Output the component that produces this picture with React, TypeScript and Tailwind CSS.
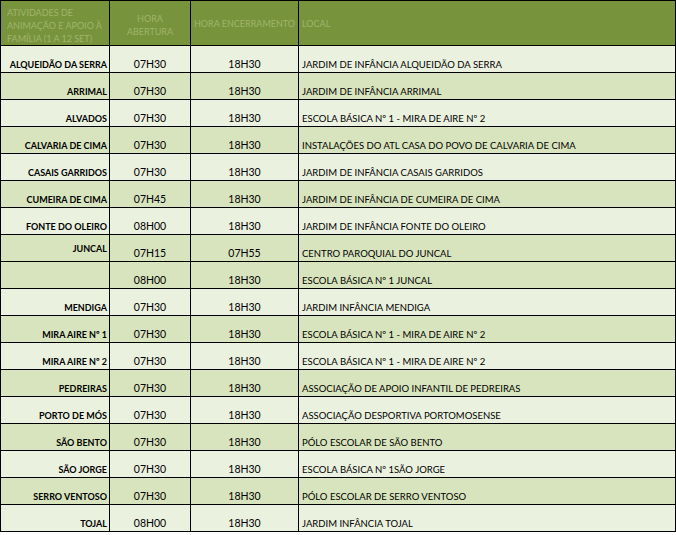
import React from "react";

type Row = { name: string; open: string; close: string; local: string; dark: boolean; mid?: boolean };

const rows: Row[] = [
  { name: "ALQUEIDÃO DA SERRA", open: "07H30", close: "18H30", local: "JARDIM DE INFÂNCIA ALQUEIDÃO DA SERRA", dark: false },
  { name: "ARRIMAL", open: "07H30", close: "18H30", local: "JARDIM DE INFÂNCIA ARRIMAL", dark: true },
  { name: "ALVADOS", open: "07H30", close: "18H30", local: "ESCOLA BÁSICA Nº 1 - MIRA DE AIRE Nº 2", dark: false },
  { name: "CALVARIA DE CIMA", open: "07H30", close: "18H30", local: "INSTALAÇÕES DO ATL CASA DO POVO DE CALVARIA DE CIMA", dark: true },
  { name: "CASAIS GARRIDOS", open: "07H30", close: "18H30", local: "JARDIM DE INFÂNCIA CASAIS GARRIDOS", dark: false },
  { name: "CUMEIRA DE CIMA", open: "07H45", close: "18H30", local: "JARDIM DE INFÂNCIA DE CUMEIRA DE CIMA", dark: true },
  { name: "FONTE DO OLEIRO", open: "08H00", close: "18H30", local: "JARDIM DE INFÂNCIA FONTE DO OLEIRO", dark: false },
  { name: "JUNCAL", open: "07H15", close: "07H55", local: "CENTRO PAROQUIAL DO JUNCAL", dark: true, mid: true },
  { name: "", open: "08H00", close: "18H30", local: "ESCOLA BÁSICA Nº 1 JUNCAL", dark: true },
  { name: "MENDIGA", open: "07H30", close: "18H30", local: "JARDIM INFÂNCIA MENDIGA", dark: false },
  { name: "MIRA AIRE Nº 1", open: "07H30", close: "18H30", local: "ESCOLA BÁSICA Nº 1 - MIRA DE AIRE Nº 2", dark: true },
  { name: "MIRA AIRE Nº 2", open: "07H30", close: "18H30", local: "ESCOLA BÁSICA Nº 1 - MIRA DE AIRE Nº 2", dark: false },
  { name: "PEDREIRAS", open: "07H30", close: "18H30", local: "ASSOCIAÇÃO DE APOIO INFANTIL DE PEDREIRAS", dark: true },
  { name: "PORTO DE MÓS", open: "07H30", close: "18H30", local: "ASSOCIAÇÃO DESPORTIVA PORTOMOSENSE", dark: false },
  { name: "SÃO BENTO", open: "07H30", close: "18H30", local: "PÓLO ESCOLAR DE SÃO BENTO", dark: true },
  { name: "SÃO JORGE", open: "07H30", close: "18H30", local: "ESCOLA BÁSICA Nº 1SÃO JORGE", dark: false },
  { name: "SERRO VENTOSO", open: "07H30", close: "18H30", local: "PÓLO ESCOLAR DE SERRO VENTOSO", dark: true },
  { name: "TOJAL", open: "08H00", close: "18H30", local: "JARDIM INFÂNCIA TOJAL", dark: false },
];

export default function App() {
  return (
    <div className="w-[676px] h-[535px] bg-white" style={{ fontFamily: "Lato, 'Open Sans', sans-serif" }}>
      <table className="border-collapse table-fixed w-[675px] text-black">
        <colgroup>
          <col className="w-[109px]" />
          <col className="w-[81px]" />
          <col className="w-[108px]" />
          <col className="w-[377px]" />
        </colgroup>
        <thead>
          <tr className="h-[45px] bg-[#77933c] text-[#9fb56c] text-[9px] leading-[13px]">
            <th className="border border-black text-left align-top font-normal pl-[6px] pr-0 pt-[5px] whitespace-nowrap">
              ATIVIDADES DE
              <br />
              ANIMAÇÃO E APOIO À
              <br />
              FAMÍLIA (1 A 12 SET)
            </th>
            <th className="border border-black text-center align-top font-normal pt-[11px]">
              HORA
              <br />
              ABERTURA
            </th>
            <th className="border border-black text-center align-middle font-normal whitespace-nowrap">
              HORA ENCERRAMENTO
            </th>
            <th className="border border-black text-left align-middle font-normal px-[3px]">LOCAL</th>
          </tr>
        </thead>
        <tbody>
          {rows.map((r, i) => (
            <tr key={i} className={`h-[27px] leading-[13px] ${r.dark ? "bg-[#d8e4bd]" : "bg-[#ebf1df]"}`}>
              <td
                className={`border border-black text-right font-bold px-[2px] whitespace-nowrap text-[9px] ${
                  r.mid ? "align-middle" : "align-bottom pb-[1px]"
                }`}
              >
                {r.name}
              </td>
              <td className="border border-black text-center align-bottom pb-[1px] text-[10.5px]">{r.open}</td>
              <td className="border border-black text-center align-bottom pb-[1px] text-[10.5px]">{r.close}</td>
              <td className="border border-black text-left align-bottom pb-[1px] px-[3px] whitespace-nowrap text-[9.5px]">
                {r.local}
              </td>
            </tr>
          ))}
        </tbody>
      </table>
    </div>
  );
}
